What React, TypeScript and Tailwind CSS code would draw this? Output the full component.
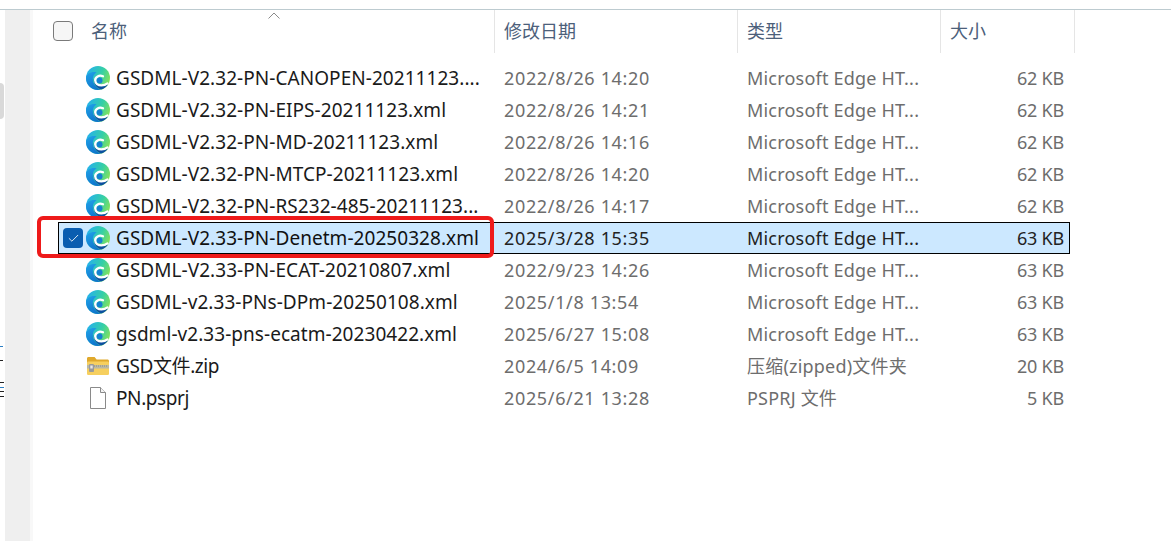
import { Check } from 'lucide-react';

/* Windows Explorer detail list, one selected row with a red marker round the name */

type FileRow = { name: string; date: string; kind: string; size: string; icon: 'edge' | 'zip' | 'file' };

const rows: FileRow[] = [
  { name: 'GSDML-V2.32-PN-CANOPEN-20211123....', date: '2022/8/26 14:20', kind: 'Microsoft Edge HT...', size: '62 KB', icon: 'edge' },
  { name: 'GSDML-V2.32-PN-EIPS-20211123.xml', date: '2022/8/26 14:21', kind: 'Microsoft Edge HT...', size: '62 KB', icon: 'edge' },
  { name: 'GSDML-V2.32-PN-MD-20211123.xml', date: '2022/8/26 14:16', kind: 'Microsoft Edge HT...', size: '62 KB', icon: 'edge' },
  { name: 'GSDML-V2.32-PN-MTCP-20211123.xml', date: '2022/8/26 14:20', kind: 'Microsoft Edge HT...', size: '62 KB', icon: 'edge' },
  { name: 'GSDML-V2.32-PN-RS232-485-20211123...', date: '2022/8/26 14:17', kind: 'Microsoft Edge HT...', size: '62 KB', icon: 'edge' },
  { name: 'GSDML-V2.33-PN-Denetm-20250328.xml', date: '2025/3/28 15:35', kind: 'Microsoft Edge HT...', size: '63 KB', icon: 'edge' },
  { name: 'GSDML-V2.33-PN-ECAT-20210807.xml', date: '2022/9/23 14:26', kind: 'Microsoft Edge HT...', size: '63 KB', icon: 'edge' },
  { name: 'GSDML-v2.33-PNs-DPm-20250108.xml', date: '2025/1/8 13:54', kind: 'Microsoft Edge HT...', size: '63 KB', icon: 'edge' },
  { name: 'gsdml-v2.33-pns-ecatm-20230422.xml', date: '2025/6/27 15:08', kind: 'Microsoft Edge HT...', size: '63 KB', icon: 'edge' },
  { name: 'GSD文件.zip', date: '2024/6/5 14:09', kind: '压缩(zipped)文件夹', size: '20 KB', icon: 'zip' },
  { name: 'PN.psprj', date: '2025/6/21 13:28', kind: 'PSPRJ 文件', size: '5 KB', icon: 'file' },
];

function EdgeIcon({ id }: { id: number }) {
  return (
    <svg width="24" height="24" viewBox="0 0 24 24" className="shrink-0">
      <defs>
        <linearGradient id={`edge-a-${id}`} x1="0.1" y1="0.2" x2="1" y2="0.6">
          <stop offset="0" stopColor="#27b4e6" />
          <stop offset="0.55" stopColor="#35cfa6" />
          <stop offset="1" stopColor="#84e25a" />
        </linearGradient>
        <linearGradient id={`edge-b-${id}`} x1="0.2" y1="0" x2="0.6" y2="1">
          <stop offset="0" stopColor="#1f9fe6" />
          <stop offset="1" stopColor="#0f74cc" />
        </linearGradient>
      </defs>
      <circle cx="12" cy="12" r="12" fill={`url(#edge-a-${id})`} />
      {/* left blue body */}
      <path d="M0 12C0 8.200 5 5.200 10.500 6.200 7.500 8 6.300 11.500 7 15c.8 4 4 7.200 8 8.600-1 .3-2 .4-3 .4C5.400 24 0 18.600 0 12z" fill={`url(#edge-b-${id})`} />
      {/* dark ribbon along the bottom */}
      <path d="M7.800 13c-.3 4.600 2.700 8.900 7.300 10.600 3-.8 5.500-2.700 7.100-5.300-3.600 1.900-8.100 1.700-11-.6C9.300 16.300 8.200 14.800 7.800 13z" fill="#0b4f9f" />
      {/* white curl, open towards the green side */}
      <ellipse cx="13.500" cy="14.400" rx="3" ry="2.900" fill="#1681d2" />
      <path d="M17 10.300C13 8.600 9.200 11 9.200 14.200c0 3.300 2.800 5.200 6.300 5.200 2.300 0 4.300-.7 6-2" fill="none" stroke="#ffffff" strokeWidth="2.300" strokeLinecap="round" />
    </svg>
  );
}

function ZipIcon() {
  return (
    <svg width="24" height="24" viewBox="0 0 24 24" className="shrink-0">
      <path d="M1 4.500C1 3.700 1.600 3 2.400 3h6.200l2 2.400h10.900c.8 0 1.500.7 1.500 1.500V9H1z" fill="#e0a92c" />
      <rect x="1" y="7.500" width="22" height="13.500" rx="1.200" fill="#f6cf5f" />
      <rect x="1" y="11" width="22" height="3.500" fill="#b9b8a6" />
      <path d="M8 12h14" stroke="#8d8d7d" strokeWidth="1" strokeDasharray="1 1" />
      <rect x="3" y="10" width="5" height="8" rx="1" fill="#9a9a9a" />
      <rect x="4.300" y="11.500" width="2.400" height="3" fill="#e7e7e7" />
    </svg>
  );
}

function FileIcon() {
  return (
    <svg width="24" height="24" viewBox="0 0 24 24" className="shrink-0">
      <path d="M4.500 1.500h10l5 5v16h-15z" fill="#ffffff" stroke="#8a8a8a" strokeWidth="1" />
      <path d="M14.500 1.500v5h5" fill="#f3f3f3" stroke="#8a8a8a" strokeWidth="1" />
    </svg>
  );
}

function RowIcon({ row, id }: { row: FileRow; id: number }) {
  if (row.icon === 'zip') return <ZipIcon />;
  if (row.icon === 'file') return <FileIcon />;
  return <EdgeIcon id={id} />;
}

export default function App() {
  return (
    <div
      className="flex h-[541px] w-[1171px] flex-col overflow-hidden bg-white text-[18px]"
      style={{ fontFamily: '"Noto Sans", "Noto Sans CJK SC", sans-serif' }}
    >
      <div className="h-[9px] shrink-0" />
      <div className="h-px shrink-0 bg-[#bdcbd0]" />

      <div className="flex min-h-0 flex-1">
        {/* Navigation pane edge */}
        <div className="relative flex w-[33px] shrink-0">
          <div className="w-[5px] bg-white" />
          <div className="w-[25px] bg-[#efefef]" />
          <div className="w-[3px] bg-[#f8f8f8]" />
          <div className="absolute left-0 top-[73px] h-[36px] w-[4px] rounded-r-sm bg-[#d9d9d9]" />
          <div className="absolute left-0 top-[336px] h-px w-[3px] bg-[#2b7fc4]" />
          <div className="absolute left-0 top-[350px] h-px w-[3px] bg-[#222222]" />
          <div className="absolute left-0 top-[372px] flex h-[15px] w-[4px] flex-col justify-between">
            <div className="h-px bg-[#222222]" />
            <div className="h-px bg-[#2b7fc4]" />
            <div className="h-px bg-[#222222]" />
            <div className="h-px bg-[#222222]" />
          </div>
        </div>

        <div className="relative min-w-0 flex-1">
          {/* Column headers */}
          <div className="relative flex h-[43px] text-[18px] text-[#4c607a]">
            <div className="flex w-[461px] items-center pl-[20px]">
              <div className="mb-[2px] h-5 w-5 rounded-[4px] border border-[#7a7a7a] bg-[#f6f6f6]" />
              <span className="ml-[18px]">名称</span>
            </div>
            <div className="flex w-[243px] items-center border-l border-[#e5e5e5] pl-[9px]">修改日期</div>
            <div className="flex w-[203px] items-center border-l border-[#e5e5e5] pl-[9px]">类型</div>
            <div className="flex w-[135px] items-center border-x border-[#e5e5e5] pl-[9px]">大小</div>
            <svg width="12" height="7" viewBox="0 0 12 7" className="absolute left-[235px] top-[2px]">
              <path d="M.5 6.500 6 1l5.500 5.500" fill="none" stroke="#8a8a8a" strokeWidth="1" />
            </svg>
          </div>

          {/* File rows */}
          <div className="ml-[25px] mt-[9px] flex w-[1012px] flex-col">
            {rows.map((row, i) => {
              const selected = i === 5;
              const muted = selected ? 'text-[#222222]' : 'text-[#6d6d6d]';
              return (
                <div
                  key={row.name}
                  className={`flex h-8 items-center ${selected ? 'border border-black bg-[#cce8ff]' : 'border border-transparent'}`}
                >
                  <div className="flex w-[435px] shrink-0 items-center pl-1">
                    <div className="flex h-5 w-5 shrink-0 items-center justify-center rounded-[4px]">
                      {selected && (
                        <div className="flex h-5 w-5 items-center justify-center rounded-[4px] bg-[#0a5db0]">
                          <Check size={13} strokeWidth={1.6} className="text-white" />
                        </div>
                      )}
                    </div>
                    <div className="ml-[3px]">
                      <RowIcon row={row} id={i} />
                    </div>
                    <span
                      className={`ml-[6px] whitespace-nowrap text-[19px] ${i >= 9 ? 'tracking-[-0.4px]' : 'tracking-[0.05px]'} ${selected ? 'text-[#111111]' : 'text-[#1a1a1a]'}`}
                    >
                      {row.name}
                    </span>
                  </div>
                  <div className={`w-[243px] shrink-0 pl-[10px] tracking-[0.65px] ${muted}`}>{row.date}</div>
                  <div className={`w-[203px] shrink-0 pl-[10px] tracking-[0.2px] ${muted}`}>{row.kind}</div>
                  <div className={`flex-1 whitespace-nowrap pr-[5px] text-right tracking-[-0.2px] ${muted}`}>{row.size}</div>
                </div>
              );
            })}
          </div>

          {/* Red marker drawn on top of the screenshot */}
          <div className="absolute left-[4px] top-[206px] h-[42px] w-[457px] rounded-[6px] border-4 border-[#ee1a1a]" />
        </div>
      </div>
    </div>
  );
}
